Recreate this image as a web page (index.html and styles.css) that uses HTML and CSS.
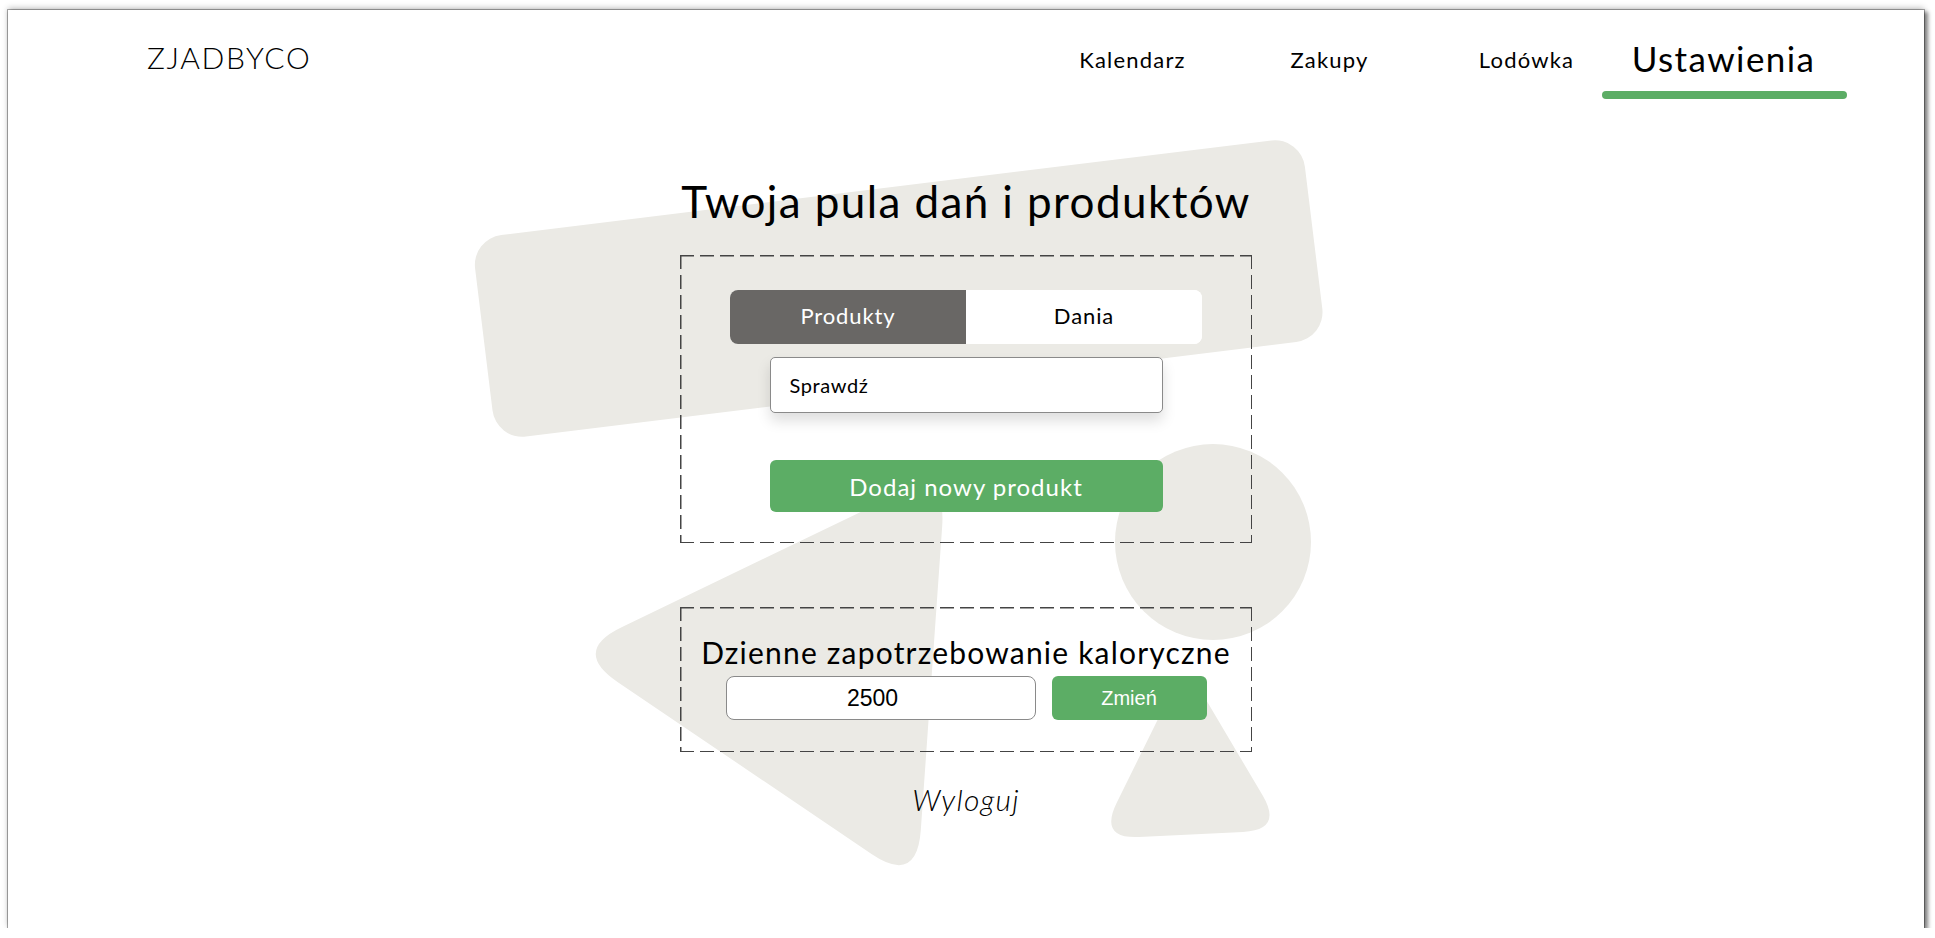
FILE: index.html
```html
<!DOCTYPE html>
<html lang="pl">
<head>
  <meta charset="UTF-8">
  <meta name="viewport" content="width=device-width, initial-scale=1.0">
  <title>Ustawienia - ZJADBYCO</title>
  <link rel="stylesheet" href="styles.css">
</head>
<body>
  <div class="window">
    <!-- tło: dekoracyjne kształty -->
    <svg class="bg-shapes" width="1916" height="918" viewBox="0 0 1916 918" aria-hidden="true">
      <rect x="473" y="177" width="836" height="203" rx="30" transform="rotate(-7 891 281)" />
      <circle cx="1205" cy="532" r="98" />
      <path d="M 888.4 484.8 L 613.6 617.2 Q 564 641 609.5 671.9 L 863.5 844.1 Q 909 875 912.8 820.1 L 934.2 515.9 Q 938 461 888.4 484.8 Z" />
      <path d="M 1159.4 689.9 L 1108.6 793.1 Q 1091 829 1131 827 L 1235 822 Q 1275 820 1254.7 785.6 L 1197.3 688.4 Q 1177 654 1159.4 689.9 Z" />
    </svg>

    <header class="top-bar">
      <div class="logo">ZJADBYCO</div>
      <nav class="main-nav">
        <ul>
          <li><a href="calendar.html">Kalendarz</a></li>
          <li><a href="shopping.html">Zakupy</a></li>
          <li><a href="fridge.html">Lodówka</a></li>
          <li><a href="settings.html" class="active">Ustawienia</a></li>
        </ul>
      </nav>
    </header>

    <main class="content">
      <h1>Twoja pula dań i produktów</h1>

      <section class="dashed-box pool-box">
        <div class="tabs">
          <button class="tab active">Produkty</button>
          <button class="tab">Dania</button>
        </div>
        <input class="search-input" type="text" value="Sprawdź">
        <button class="add-btn">Dodaj nowy produkt</button>
      </section>

      <section class="dashed-box kcal-box">
        <h2>Dzienne zapotrzebowanie kaloryczne</h2>
        <div class="kcal-row">
          <input class="kcal-input" type="text" value="2500">
          <button class="kcal-btn">Zmień</button>
        </div>
      </section>

      <a href="#" class="logout">Wyloguj</a>
    </main>
  </div>
</body>
</html>
```

FILE: styles.css
```css
:root {
  --green: #5cad65;
  --beige: #ebeae5;
  --dark: #696765;
  --dash: #444;
}

body {
  margin: 0;
  background: #fff;
  font-family: 'Lato', 'Open Sans', sans-serif;
  color: #000;
}

.window {
  position: relative;
  margin: 10px 0 0 8px;
  width: 1916px;
  height: 918px;
  background: #fff;
  box-shadow: 0 0 0 1px rgba(0,0,0,0.3), 3px 3px 4px 1px rgba(0,0,0,0.45), 0 -2px 6px rgba(0,0,0,0.25);
  overflow: hidden;
}

.bg-shapes {
  position: absolute;
  top: 0;
  left: 0;
  z-index: 0;
}

.bg-shapes * {
  fill: var(--beige);
}

.top-bar {
  position: relative;
  z-index: 1;
  display: flex;
  justify-content: space-between;
  align-items: flex-start;
  height: 100px;
  padding: 26px 102px 0 139px;
  box-sizing: border-box;
}

.logo {
  font-size: 30px;
  line-height: 42px;
  font-weight: 300;
  letter-spacing: 1.6px;
}

.main-nav ul {
  display: flex;
  list-style: none;
  margin: 0;
  padding: 0;
}

.main-nav a {
  position: relative;
  display: block;
  width: 197px;
  text-align: center;
  line-height: 44px;
  margin-top: 2px;
  font-size: 22px;
  letter-spacing: 1.2px;
  color: #000;
  text-decoration: none;
}

.main-nav a.active {
  margin-top: 0;
  font-size: 35px;
  letter-spacing: 1.4px;
}

.main-nav a.active::after {
  content: '';
  position: absolute;
  top: 55px;
  left: 50%;
  width: 245px;
  height: 8px;
  margin-left: -122px;
  border-radius: 4px;
  background: var(--green);
}

.content {
  position: relative;
  z-index: 1;
  display: flex;
  flex-direction: column;
  align-items: center;
}

h1 {
  margin: 65px 0 28px;
  font-size: 44px;
  line-height: 52px;
  font-weight: 400;
  letter-spacing: 1.4px;
}

.dashed-box {
  box-sizing: border-box;
  width: 572px;
  display: flex;
  flex-direction: column;
  align-items: center;
  background:
    repeating-linear-gradient(90deg, var(--dash) 0 14px, transparent 14px 20px) top left / 100% 1.5px no-repeat,
    repeating-linear-gradient(90deg, var(--dash) 0 14px, transparent 14px 20px) bottom left / 100% 1.5px no-repeat,
    repeating-linear-gradient(180deg, var(--dash) 0 14px, transparent 14px 20px) top left / 1.5px 100% no-repeat,
    repeating-linear-gradient(180deg, var(--dash) 0 14px, transparent 14px 20px) top right / 1.5px 100% no-repeat;
}

.pool-box {
  height: 288px;
  padding-top: 35px;
}

.tabs {
  display: flex;
  width: 472px;
  height: 54px;
  border-radius: 8px;
  overflow: hidden;
  background: #fff;
}

.tab {
  flex: 1;
  border: none;
  padding: 0 0 3px;
  background: #fff;
  font-family: inherit;
  font-size: 22px;
  letter-spacing: 0.9px;
  color: #000;
  cursor: pointer;
}

.tab.active {
  background: var(--dark);
  color: #fff;
}

.search-input {
  box-sizing: border-box;
  width: 393px;
  height: 56px;
  margin-top: 13px;
  padding: 0 19px;
  border: 1px solid #8a8a8a;
  border-radius: 5px;
  box-shadow: 0 8px 14px rgba(0,0,0,0.13);
  font-family: inherit;
  font-size: 20px;
  letter-spacing: 0.6px;
  color: #000;
  outline: none;
}

.add-btn {
  width: 393px;
  height: 52px;
  margin-top: 47px;
  border: none;
  border-radius: 6px;
  background: var(--green);
  color: #fff;
  font-family: inherit;
  font-size: 24px;
  letter-spacing: 1px;
  cursor: pointer;
}

.kcal-box {
  height: 145px;
  margin-top: 64px;
  padding-top: 27px;
}

h2 {
  margin: 0;
  font-size: 30px;
  line-height: 36px;
  font-weight: 400;
  letter-spacing: 1.2px;
}

.kcal-row {
  display: flex;
  gap: 16px;
  margin-top: 6px;
}

.kcal-input {
  box-sizing: border-box;
  width: 310px;
  height: 44px;
  padding: 0 16px 0 0;
  border: 1px solid #8a8a8a;
  border-radius: 8px;
  text-align: center;
  font-family: 'Liberation Sans', Arial, sans-serif;
  font-size: 23px;
  color: #000;
  outline: none;
}

.kcal-btn {
  width: 155px;
  height: 44px;
  border: none;
  border-radius: 6px;
  background: var(--green);
  color: #fff;
  font-family: 'Liberation Sans', Arial, sans-serif;
  font-size: 20px;
  cursor: pointer;
}

.logout {
  margin-top: 29px;
  font-size: 30px;
  line-height: 36px;
  font-weight: 300;
  font-style: italic;
  letter-spacing: 1.2px;
  color: #000;
  text-decoration: none;
}
```
